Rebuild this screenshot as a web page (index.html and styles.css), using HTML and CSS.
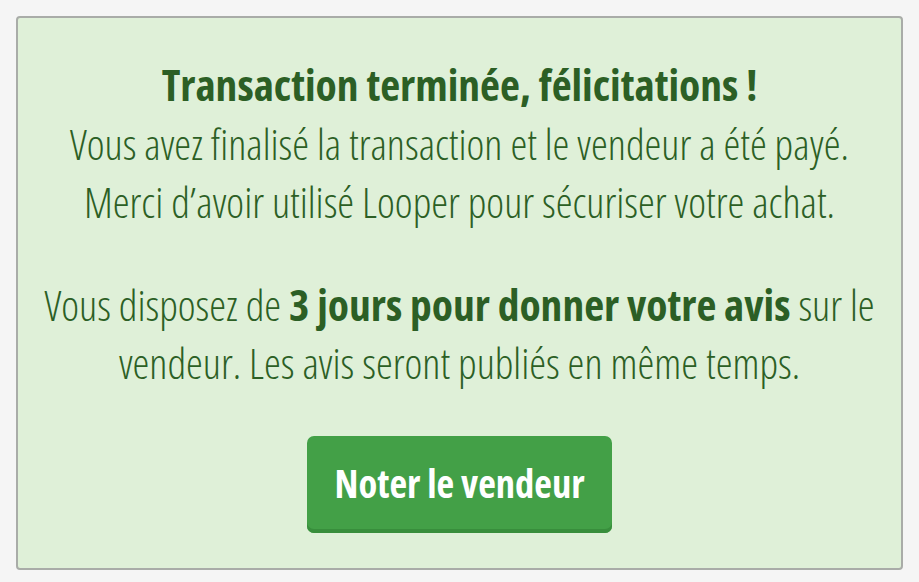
FILE: index.html
```html
<!DOCTYPE html>
<html lang="fr">
<head>
<meta charset="utf-8">
<link rel="stylesheet" href="styles.css">
</head>
<body>
<div class="card">
  <p class="msg"><strong class="title">Transaction terminée, félicitations !</strong>Vous avez finalisé la transaction et le vendeur a été payé.<br>Merci d’avoir utilisé Looper pour sécuriser votre achat.</p>
  <p class="msg second">Vous disposez de <strong>3 jours pour donner votre avis</strong> sur le vendeur. Les avis seront publiés en même temps.</p>
  <button class="btn">Noter le vendeur</button>
</div>
</body>
</html>
```
FILE: styles.css
```css
html, body {
  margin: 0;
  padding: 0;
  background: #f5f5f5;
}
body {
  padding: 16px 16px 12px 16px;
  font-family: "Open Sans", sans-serif;
  font-stretch: 75%;
}
.card {
  box-sizing: border-box;
  height: 554px;
  background: #dff0d8;
  border: 2px solid #a9aca8;
  border-radius: 4px;
  padding: 38px 26px 0;
  display: flex;
  flex-direction: column;
  align-items: center;
  color: #2c5f25;
  text-align: center;
}
.msg {
  margin: 0;
  font-size: 42.5px;
  font-weight: 300;
  line-height: 58px;
}
.msg strong {
  font-weight: 700;
  font-size: 43.5px;
  line-height: 58px;
}
.title {
  display: block;
  line-height: 60px;
  margin-bottom: 1px;
}
.second {
  margin-top: 45px;
}
.btn {
  margin-top: 44px;
  width: 305px;
  height: 97px;
  border: none;
  border-radius: 7px;
  background: #43a047;
  box-shadow: inset 0 -4px 0 #388e3c;
  color: #fff;
  font-family: "Open Sans", sans-serif;
  font-stretch: 75%;
  font-weight: 700;
  font-size: 38.5px;
  padding: 0 0 4px;
}
```
